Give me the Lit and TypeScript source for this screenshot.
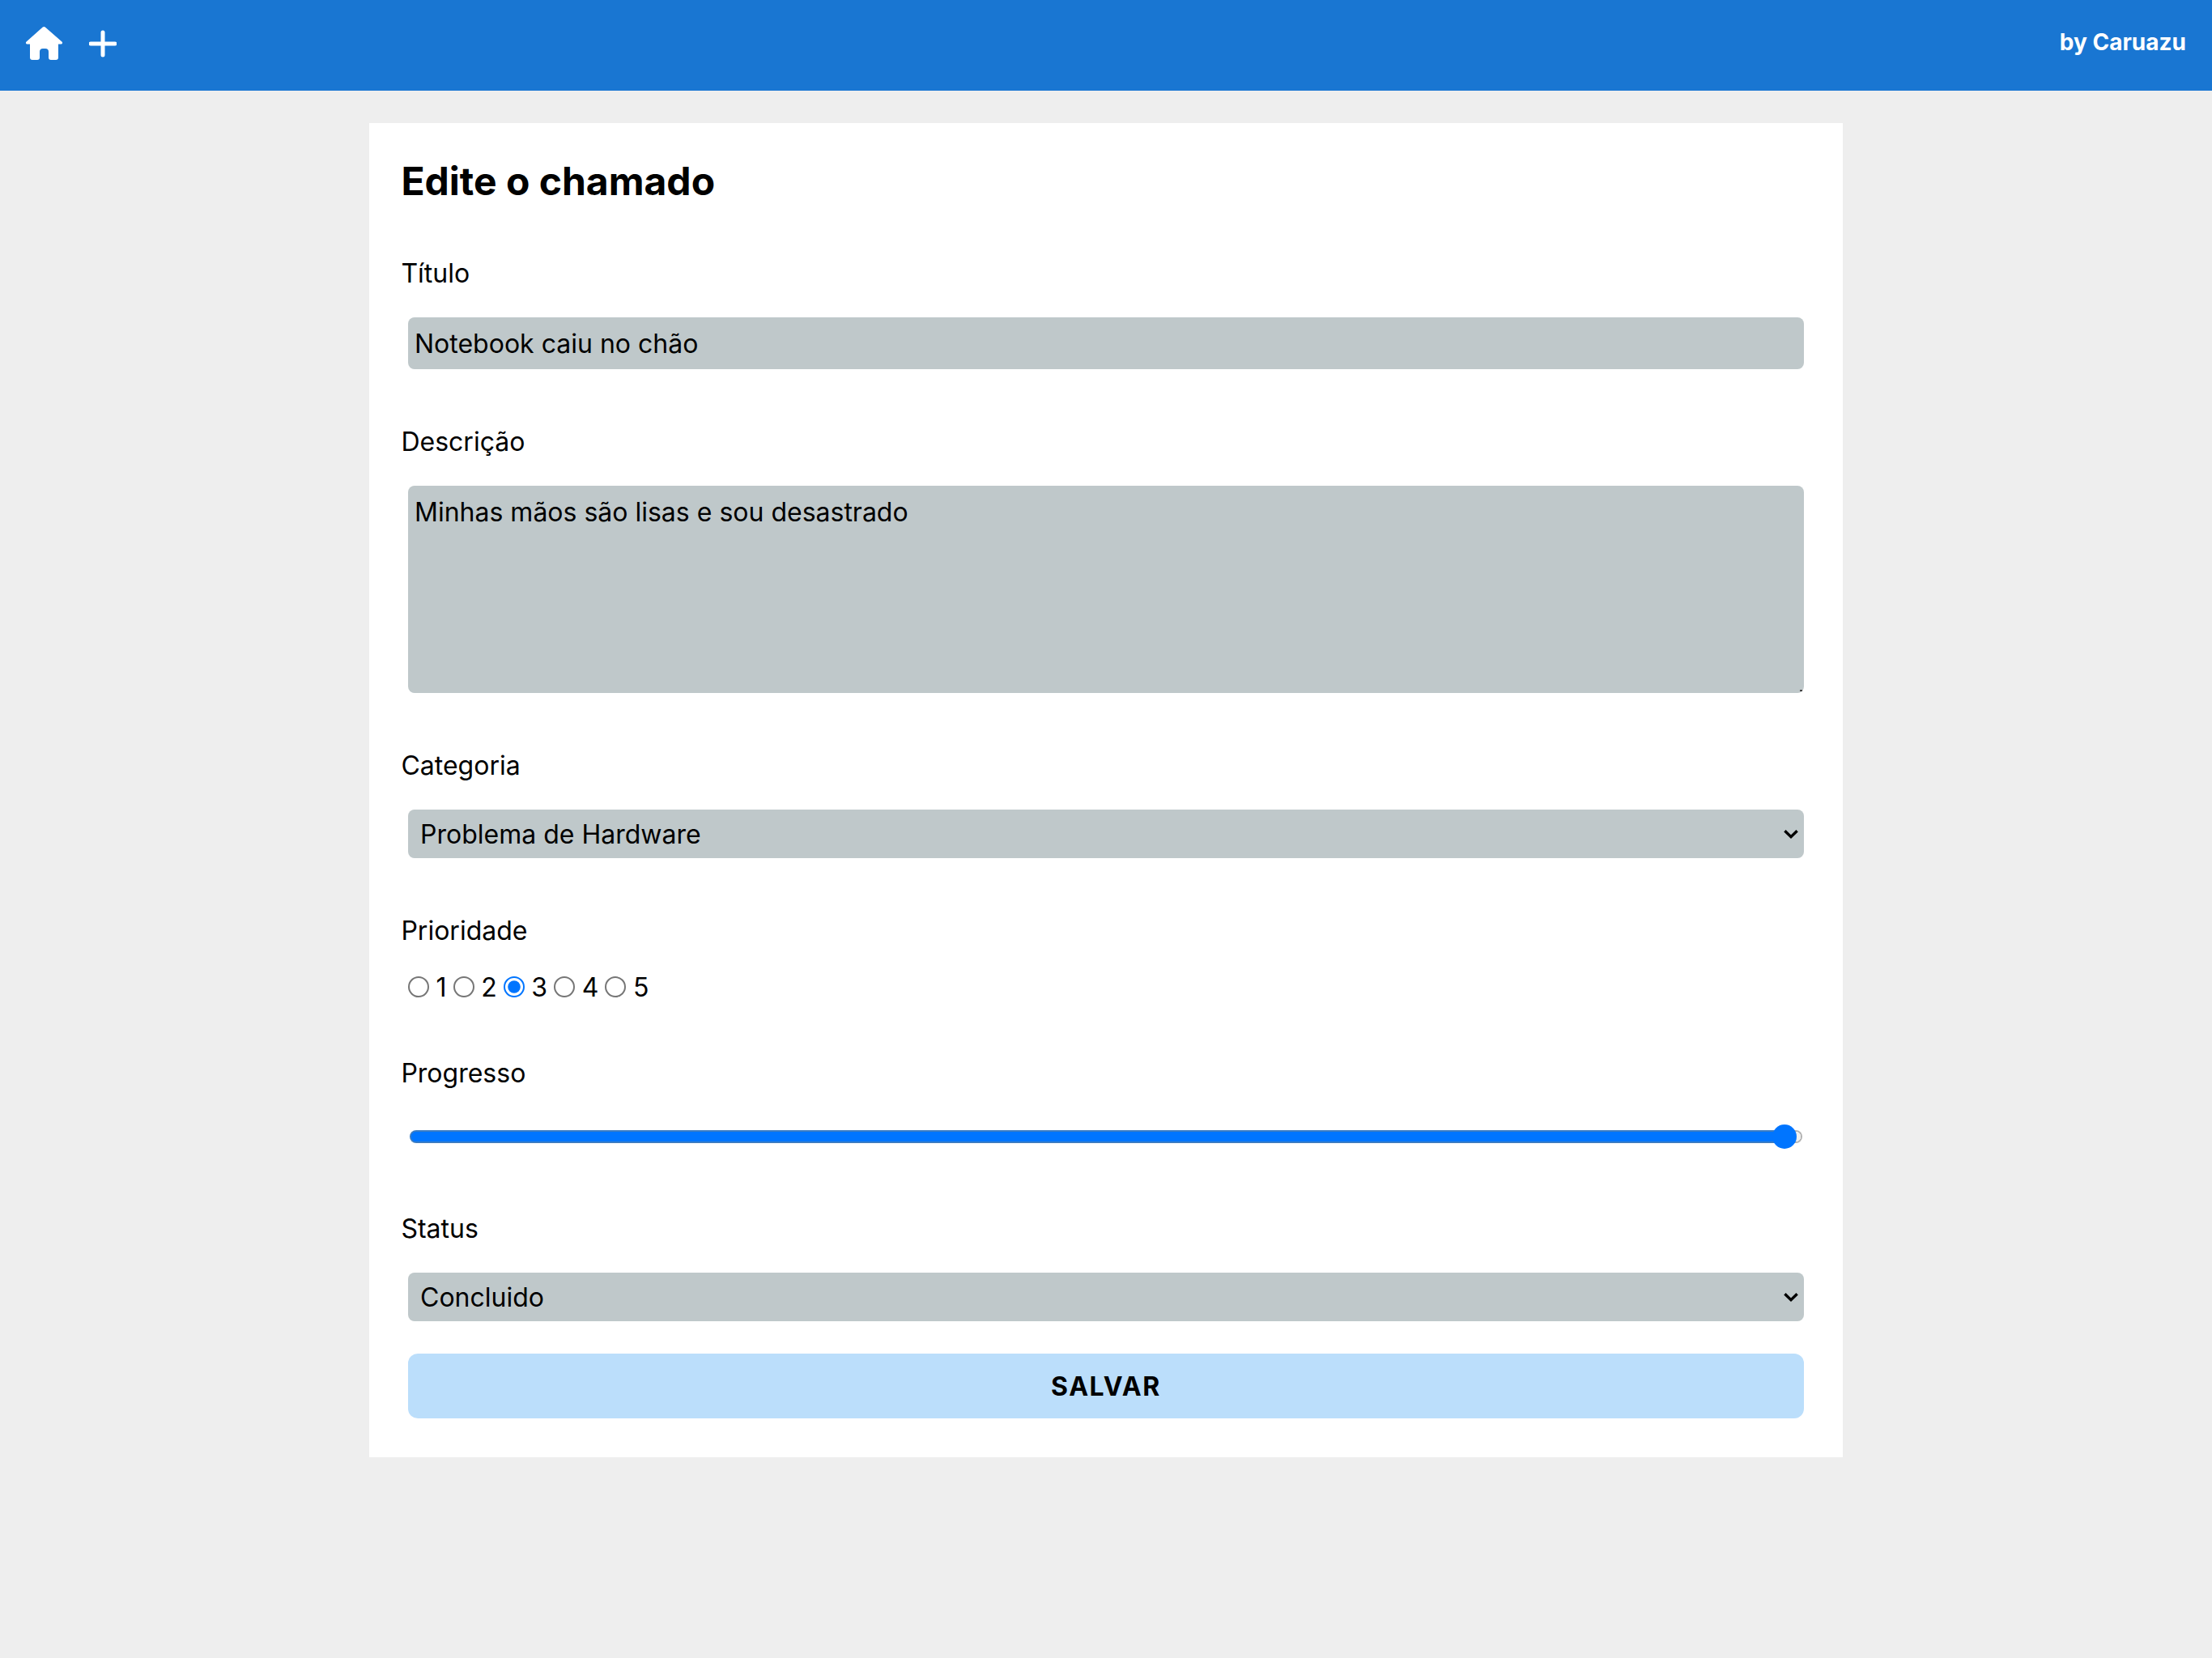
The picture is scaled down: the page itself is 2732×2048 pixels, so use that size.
import { LitElement, html, css } from "lit";
import { customElement } from "lit/decorators.js";

@customElement("app-root")
export class AppRoot extends LitElement {
  static styles = css`
    :host { display: block; }
    .page {
      zoom: 2;
      min-height: 1024px;
      background: #eeeeee;
      font-family: Inter, "Noto Sans", sans-serif;
      font-size: 16px;
      color: #000;
      display: flow-root;
    }
    header {
      height: 56px;
      background: #1976d2;
      display: flex;
      align-items: flex-start;
      justify-content: space-between;
      color: #fff;
    }
    .icons { display: flex; align-items: center; gap: 16px; padding: 15px 0 0 15px; }
    .icons svg { display: block; fill: #fff; }
    .by { font-size: 14px; font-weight: 700; line-height: 18px; padding: 17px 16px 0 0; }
    .card {
      width: 910px;
      box-sizing: border-box;
      margin: 20px auto 0;
      background: #fff;
      padding: 20px 20px 24px;
    }
    h1 { margin: 1px 0 31px -0.3px; font-size: 24px; font-weight: 730; line-height: 30px; }
    label { display: block; line-height: 20px; padding-top: 1px; margin: 0 0 17px -0.3px; font-size: 16px; }
    .ctl {
      display: block;
      box-sizing: border-box;
      width: 862px;
      margin: 0 0 34px 4px;
      border: none;
      border-radius: 4px;
      background: #bfc8ca;
      color: #000;
      font-family: inherit;
      font-size: 16px;
      outline: none;
    }
    input.ctl { height: 32px; padding: 0 4px; }
    textarea.ctl { height: 128px; padding: 6.5px 4px 4px; margin-bottom: 34px; }
    textarea.ctl::-webkit-resizer {
      background: linear-gradient(#444, #444) no-repeat right 1px bottom 1px / 1.5px 1px;
    }
    select.ctl {
      height: 30px;
      padding: 0 0 0 7.5px;
      appearance: none;
      -webkit-appearance: none;
      background-image: url("data:image/svg+xml,%3Csvg xmlns='http://www.w3.org/2000/svg' viewBox='0 0 18 12'%3E%3Cpath d='M1.4 2.2L9 9.6l7.6-7.4' fill='none' stroke='%23000' stroke-width='3.4'/%3E%3C/svg%3E");
      background-repeat: no-repeat;
      background-size: 9px 6px;
      background-position: right 3.5px center;
    }
    .radios { display: flex; height: 34px; align-items: flex-start; margin: -5px 0 21px; }
    .radios span { line-height: 20px; margin-top: 3px; }
    .radios input { margin: 6px 4.3px 0 4px; }
    .slider {
      zoom: 0.5;
      display: block;
      appearance: none;
      -webkit-appearance: none;
      background: transparent;
      width: 1720px;
      height: 32px;
      margin: 42px 0 76px 10px;
      padding: 0;
    }
    .slider::-webkit-slider-runnable-track {
      height: 16px;
      border-radius: 8px;
      background:
        radial-gradient(circle at 8px 50%, #0075ff 6px, transparent 6.5px),
        linear-gradient(#0075ff, #0075ff) 8px 2px / 98% 12px no-repeat,
        linear-gradient(#3b7cc2, #3b7cc2) 0 0 / 98.7% 16px no-repeat,
        radial-gradient(circle at calc(100% - 8px) 50%, #efefef 6px, transparent 6.5px),
        #b2b2b2;
    }
    .slider::-webkit-slider-thumb {
      -webkit-appearance: none;
      appearance: none;
      width: 30px;
      height: 30px;
      margin-top: -7px;
      border: none;
      border-radius: 50%;
      background: #0075ff;
    }
    button {
      display: block;
      width: 862px;
      height: 40px;
      margin: 20px 0 0 4px;
      border: none;
      border-radius: 6px;
      background: #bbdefb;
      color: #000;
      font-family: inherit;
      font-size: 16px;
      font-weight: 700;
      letter-spacing: 0.8px;
    }
    .last { margin-bottom: 0 !important; }
  `;

  render() {
    return html`
      <div class="page">
        <header>
          <div class="icons">
            <svg width="24" height="24" viewBox="0 0 48 48" aria-label="Início">
              <path d="M22.8 3.6a2.2 2.2 0 0 1 3 0L46.4 21.6a1.6 1.6 0 0 1-1 2.9H42V41a3 3 0 0 1-3 3h-6a3 3 0 0 1-3-3v-7a4 4 0 0 0-4-4h-3a4 4 0 0 0-4 4v7a3 3 0 0 1-3 3h-6a3 3 0 0 1-3-3V24.5H3.6a1.6 1.6 0 0 1-1-2.9Z"/>
            </svg>
            <svg width="17" height="17" viewBox="0 0 34 34" aria-label="Novo">
              <path d="M17 3v28M2 17h30" fill="none" stroke="#fff" stroke-width="5" stroke-linecap="round"/>
            </svg>
          </div>
          <div class="by">by Caruazu</div>
        </header>
        <main class="card">
          <h1>Edite o chamado</h1>
          <label>Título</label>
          <input class="ctl" type="text" .value=${"Notebook caiu no chão"} />
          <label>Descrição</label>
          <textarea class="ctl" .value=${"Minhas mãos são lisas e sou desastrado"}></textarea>
          <label>Categoria</label>
          <select class="ctl"><option>Problema de Hardware</option></select>
          <label>Prioridade</label>
          <div class="radios">
            ${[1, 2, 3, 4, 5].map(
              (n) => html`<input type="radio" name="prio" ?checked=${n === 3} /><span>${n}</span>`
            )}
          </div>
          <label>Progresso</label>
          <input class="slider" type="range" min="0" max="100" step="0.1" value="99.6" />
          <label>Status</label>
          <select class="ctl last"><option>Concluido</option></select>
          <button>SALVAR</button>
        </main>
      </div>
    `;
  }
}
